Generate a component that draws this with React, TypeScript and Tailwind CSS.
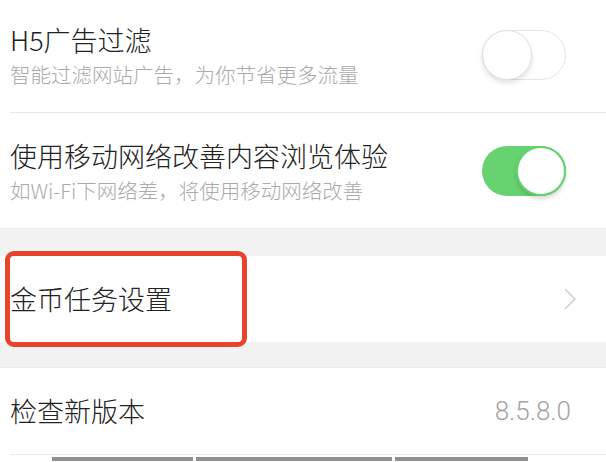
import React from 'react';

const font = { fontFamily: '"Noto Sans CJK SC", "Noto Sans", sans-serif' };

const Toggle: React.FC<{ on: boolean }> = ({ on }) => (
  <div
    className={`relative w-[84px] h-[50px] rounded-full ${
      on ? 'bg-[#66d270]' : 'bg-white border border-[#e6e6e6]'
    }`}
  >
    <div
      className={`absolute top-0 w-[50px] h-[50px] rounded-full bg-white ${
        on
          ? 'right-0 border-2 border-[#66d270] shadow-[0_3px_4px_rgba(0,0,0,0.15)]'
          : 'left-[-1px] top-[-1px] border border-[#e0e0e0] shadow-[0_3px_5px_rgba(0,0,0,0.12)]'
      }`}
    />
  </div>
);

const SwitchRow: React.FC<{ title: string; sub: string; on: boolean; className?: string }> = ({
  title,
  sub,
  on,
  className = '',
}) => (
  <div className={`h-[115px] flex items-center pl-[10px] pr-[40px] bg-white ${className}`}>
    <div className="flex-1 flex flex-col">
      <div className="text-[27px] leading-[34px] font-light text-[#222]">{title}</div>
      <div className="mt-[5px] text-[20.5px] leading-[24px] font-light text-[#aaa]">{sub}</div>
    </div>
    <Toggle on={on} />
  </div>
);

const Divider = () => (
  <div className="bg-white">
    <div className="ml-[10px] h-px bg-[#e9e9e9]" />
  </div>
);

export default function App() {
  return (
    <div className="w-[606px] h-[462px] overflow-hidden bg-white" style={font}>
      <SwitchRow className="mt-[-3px]" title="H5广告过滤" sub="智能过滤网站广告，为你节省更多流量" on={false} />
      <Divider />
      <SwitchRow title="使用移动网络改善内容浏览体验" sub="如Wi-Fi下网络差，将使用移动网络改善" on={true} />

      <div className="h-[28px] bg-[#f2f2f2] border-t border-[#ebebeb]" />

      <div className="relative h-[86px] flex items-center justify-between pl-[10px] pr-[30px] bg-white">
        <span className="text-[27px] leading-[34px] font-light text-[#222]">金币任务设置</span>
        <svg width="12" height="22" viewBox="0 0 12 22" fill="none">
          <path d="M1 1l10 10L1 21" stroke="#cfcfcf" strokeWidth="1.5" />
        </svg>
        <div className="absolute left-[5px] top-[-5px] w-[242px] h-[96px] rounded-[9px] border-[5px] border-[#e8432b]" />
      </div>

      <div className="h-[26px] bg-[#f2f2f2] border-b border-[#ebebeb]" />

      <div className="h-[86px] flex items-center justify-between pl-[10px] pr-[35px] bg-white">
        <span className="text-[27px] leading-[34px] font-light text-[#222]">检查新版本</span>
        <span
          className="text-[26px] leading-[30px] text-[#a3a3a3] font-light"
          style={{ fontFamily: 'Roboto, "Liberation Sans", sans-serif' }}
        >
          8.5.8.0
        </span>
      </div>
      <Divider />

      <div className="h-[6px] bg-white flex items-end pl-[52px] gap-[3px]">
        <div className="w-[141px] h-[4px] bg-[#8f8f8f]" />
        <div className="w-[196px] h-[4px] bg-[#8f8f8f]" />
        <div className="w-[133px] h-[4px] bg-[#8f8f8f]" />
      </div>
    </div>
  );
}
